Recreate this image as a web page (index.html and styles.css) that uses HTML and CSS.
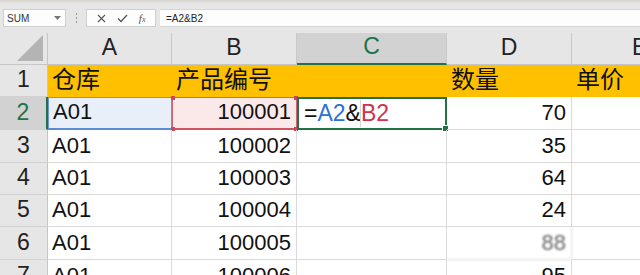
FILE: index.html
```html
<!DOCTYPE html>
<html lang="zh-CN">
<head>
    <meta charset="UTF-8">
    <title>Excel</title>
    <link rel="stylesheet" href="styles.css">
</head>
<body>
    <!-- Formula bar -->
    <div class="top-edge"></div>
    <div class="formula-bar">
        <div class="name-box">
            <span>SUM</span>
            <svg class="caret" width="7" height="4" viewBox="0 0 7 4"><path d="M0 0h7L3.5 4z" fill="#777"/></svg>
        </div>
        <div class="grip"><i></i><i></i><i></i></div>
        <div class="fx-box">
            <svg width="9" height="9" viewBox="0 0 9 9"><path d="M1 1l7 7M8 1L1 8" stroke="#555" stroke-width="1.1"/></svg>
            <svg width="11" height="9" viewBox="0 0 11 9"><path d="M1 4.5l3 3L10 1" stroke="#555" stroke-width="1.3" fill="none"/></svg>
            <span class="fx">f<small>x</small></span>
        </div>
        <div class="formula-input">=A2&amp;B2</div>
    </div>
    <div class="gap"></div>

    <!-- Sheet grid -->
    <div class="sheet">
        <div class="corner"><div class="tri"></div></div>
        <div class="hd">A</div>
        <div class="hd">B</div>
        <div class="hd hd-active">C</div>
        <div class="hd">D</div>
        <div class="hd hd-cut">E</div>

        <div class="rh">1</div>
        <div class="c y">仓库</div>
        <div class="c y">产品编号</div>
        <div class="c y"></div>
        <div class="c y">数量</div>
        <div class="c y">单价</div>

        <div class="rh rh-active">2</div>
        <div class="c ref-a">A01</div>
        <div class="c num ref-b">100001<b class="h tl"></b><b class="h tr"></b><b class="h bl"></b><b class="h br"></b></div>
        <div class="c edit"><span>=</span><span class="blue">A2</span><span>&amp;</span><span class="caret-line"></span><span class="red">B2</span><b class="fill"></b></div>
        <div class="c num">70</div>
        <div class="c"></div>

        <div class="rh">3</div>
        <div class="c">A01</div>
        <div class="c num">100002</div>
        <div class="c"></div>
        <div class="c num">35</div>
        <div class="c"></div>

        <div class="rh">4</div>
        <div class="c">A01</div>
        <div class="c num">100003</div>
        <div class="c"></div>
        <div class="c num">64</div>
        <div class="c"></div>

        <div class="rh">5</div>
        <div class="c">A01</div>
        <div class="c num">100004</div>
        <div class="c"></div>
        <div class="c num">24</div>
        <div class="c"></div>

        <div class="rh">6</div>
        <div class="c">A01</div>
        <div class="c num">100005</div>
        <div class="c"></div>
        <div class="c num blur">88</div>
        <div class="c"></div>

        <div class="rh">7</div>
        <div class="c">A01</div>
        <div class="c num">100006</div>
        <div class="c"></div>
        <div class="c num">95</div>
        <div class="c"></div>
    </div>
</body>
</html>
```

FILE: styles.css
```css
body {
    margin: 0;
    width: 640px;
    height: 275px;
    overflow: hidden;
    background-color: #e6e6e6;
    font-family: 'Liberation Sans', 'Noto Sans CJK SC', sans-serif;
    color: #111;
}

.top-edge {
    height: 3px;
    background: linear-gradient(to bottom, #d6d3ce, #e4e2df);
}

.formula-bar {
    display: flex;
    align-items: stretch;
    height: 18px;
    margin-top: 6px;
    padding-left: 3px;
    font-size: 10px;
}

.name-box {
    width: 63px;
    background-color: #fdfdfd;
    border: 1px solid #d0d0d0;
    box-sizing: border-box;
    display: flex;
    align-items: center;
    justify-content: space-between;
    padding: 0 4px 0 3px;
    color: #333;
}

.grip {
    width: 20px;
    display: flex;
    flex-direction: column;
    align-items: center;
    justify-content: center;
    gap: 2px;
}

.grip i {
    width: 1px;
    height: 2px;
    background-color: #9a9a9a;
}

.fx-box {
    width: 70px;
    background-color: #fdfdfd;
    border: 1px solid #d0d0d0;
    box-sizing: border-box;
    display: flex;
    align-items: center;
    justify-content: space-around;
    padding: 0 4px;
}

.fx {
    font-family: 'Liberation Serif', serif;
    font-style: italic;
    font-size: 11px;
    color: #555;
}

.fx small {
    font-size: 8px;
}

.formula-input {
    flex: 1;
    margin-left: 4px;
    background-color: #fdfdfd;
    border-top: 1px solid #d6d6d6;
    border-bottom: 1px solid #d6d6d6;
    box-sizing: border-box;
    display: flex;
    align-items: center;
    padding-left: 6px;
    color: #222;
}

.gap {
    height: 6px;
}

/* Grid */
.sheet {
    display: grid;
    grid-template-columns: 48px 124px 125px 150px 125px 1fr;
    grid-template-rows: 32px 32px 33px 33px 32px 32px 33px 33px;
    background-color: #fff;
}

.corner {
    background-color: #e6e6e6;
    border-right: 1px solid #c6c6c6;
    border-bottom: 1px solid #c6c6c6;
    display: flex;
    align-items: flex-end;
    justify-content: flex-end;
    padding: 0 4px 3px 0;
}

.tri {
    width: 0;
    height: 0;
    border-left: 26px solid transparent;
    border-bottom: 26px solid #b4b4b4;
}

.hd {
    background-color: #e6e6e6;
    border-right: 1px solid #c8c8c8;
    border-bottom: 1px solid #c6c6c6;
    display: flex;
    justify-content: center;
    align-items: flex-end;
    padding-bottom: 3px;
    font-size: 23px;
    color: #222;
    box-sizing: border-box;
}

.hd-active {
    background-color: #d2d2d2;
    color: #217346;
    border-bottom: 2px solid #217346;
}

.hd-cut {
    justify-content: flex-start;
    padding-left: 60px;
}

.rh {
    background-color: #e6e6e6;
    border-right: 1px solid #c6c6c6;
    border-bottom: 1px solid #d2d2d2;
    display: flex;
    justify-content: center;
    align-items: flex-end;
    padding-bottom: 3px;
    font-size: 23px;
    color: #222;
    box-sizing: border-box;
}

.rh-active {
    background-color: #d2d2d2;
    color: #217346;
    border-right: 2px solid #217346;
}

.c {
    position: relative;
    border-right: 1px solid #dadada;
    border-bottom: 1px solid #dadada;
    box-sizing: border-box;
    display: flex;
    align-items: flex-end;
    padding: 0 5px 3px 4px;
    font-size: 22px;
    white-space: nowrap;
}

.num {
    justify-content: flex-end;
}

.y {
    background-color: #ffc000;
    border-right-color: #ffc000;
    border-bottom-color: #ffc000;
    font-size: 24px;
    padding-bottom: 1px;
}

.ref-a {
    background-color: #e9eff9;
    border: 1px solid #6c96d8;
    border-bottom: 2px solid #5b8bd6;
}

.ref-b {
    background-color: #fbe9ea;
    border: 1px solid #d06570;
    border-bottom: 2px solid #d0545e;
}

.h {
    position: absolute;
    width: 4px;
    height: 4px;
    background-color: #c9485a;
}

.tl { top: -2px; left: -2px; }
.tr { top: -2px; right: -2px; }
.bl { bottom: -3px; left: -2px; }
.br { bottom: -3px; right: -2px; }

.edit {
    border: 2px solid #217346;
    padding-left: 5px;
    align-items: center;
    padding-bottom: 0;
    font-size: 23px;
}

.blue {
    color: #2f6fd6;
}

.red {
    color: #d0334a;
}

.caret-line {
    width: 1px;
    height: 27px;
    margin-left: -1px;
    background-color: #d8d8d8;
}

.fill {
    position: absolute;
    right: -4px;
    bottom: -4px;
    width: 5px;
    height: 5px;
    background-color: #217346;
    border: 1px solid #fff;
}

.blur {
    color: #666;
    filter: blur(1px);
}
```
